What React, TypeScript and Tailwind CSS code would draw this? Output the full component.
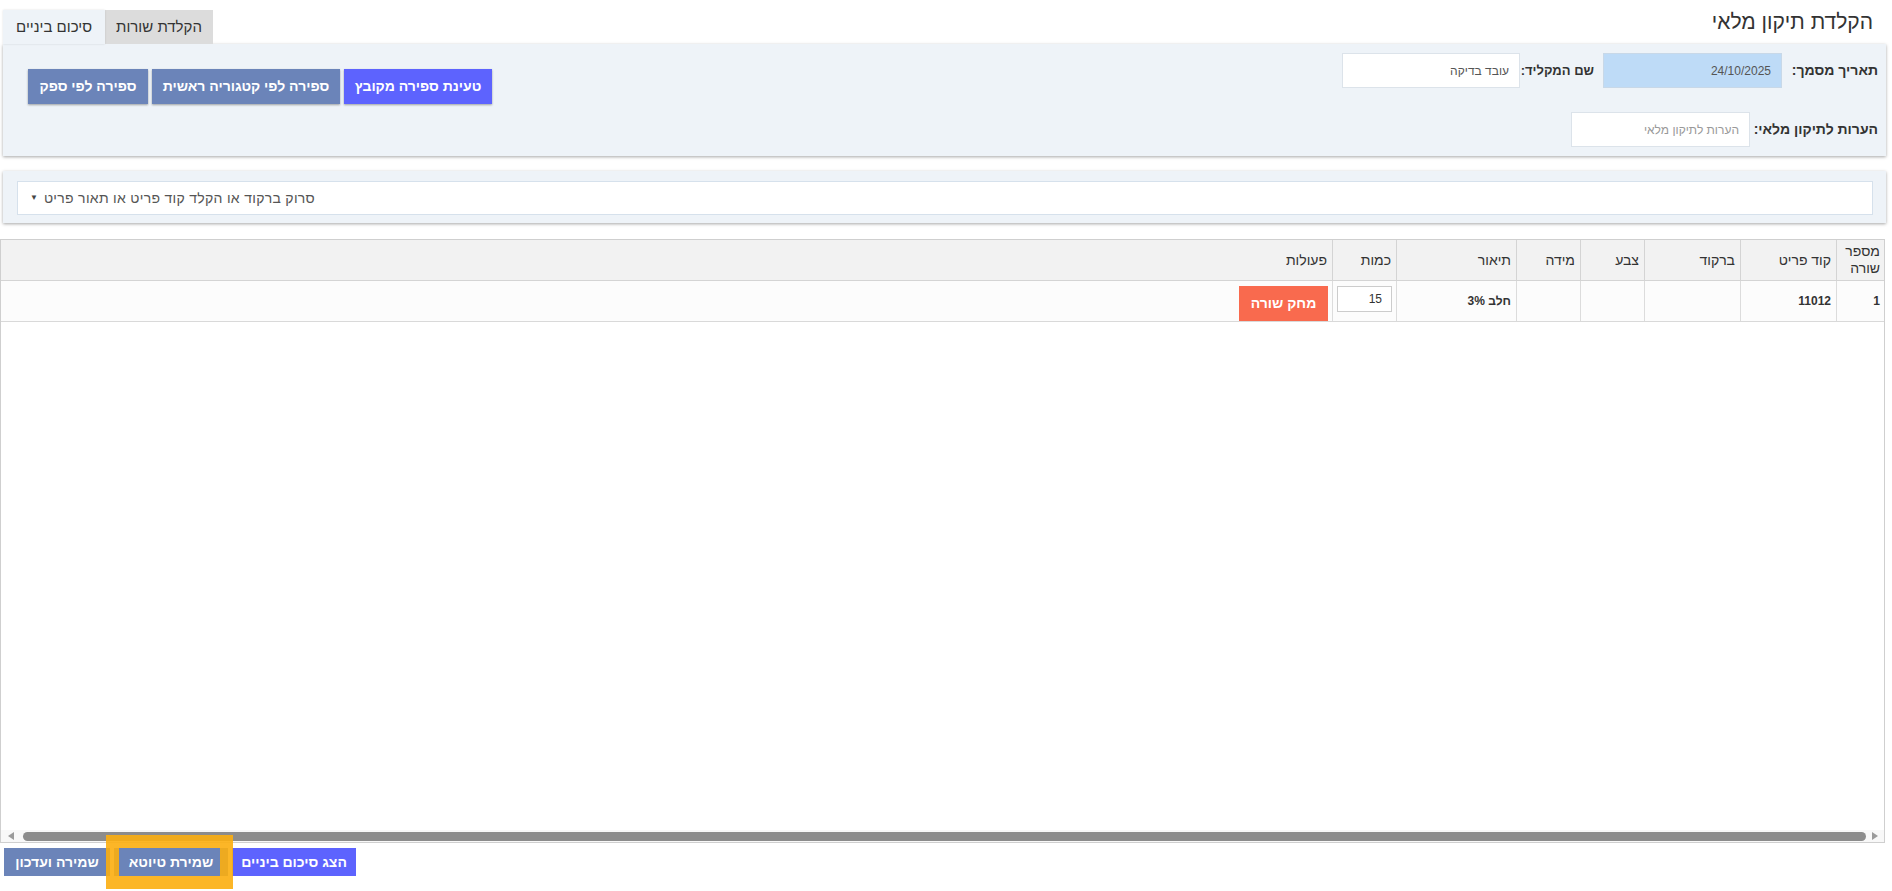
import React from "react";

const FONT = "font-['Liberation_Sans','Noto_Sans',Arial,sans-serif]";

function PanelButton({ w, purple, children }: { w: string; purple?: boolean; children: React.ReactNode }) {
  return (
    <button
      className={`${w} h-[35px] ${purple ? "bg-[#5d63fe]" : "bg-[#6b84b9]"} flex items-center justify-center whitespace-nowrap text-[14px] font-bold text-white shadow-[0_1px_2px_rgba(0,0,0,0.35)]`}
    >
      {children}
    </button>
  );
}

export default function App() {
  return (
    <div dir="rtl" className={`relative h-[891px] w-[1892px] overflow-hidden bg-white text-[#333] ${FONT}`}>
      {/* Header */}
      <div className="flex h-[44px] items-stretch justify-between pl-[3px] pr-[19px]">
        <h1 className="self-center pb-[1px] text-[21px] font-normal leading-none text-[#333]">הקלדת תיקון מלאי</h1>
        <div className="flex items-end">
          <div className="flex h-[34px] w-[108px] items-center justify-center bg-[#dcdcdc] text-[15px] text-[#333]">
            הקלדת שורות
          </div>
          <div className="flex h-[34px] w-[102px] items-center justify-center bg-[#eef3f8] text-[15px] text-[#333] shadow-[0_0_2px_rgba(0,0,0,0.12)]">
            סיכום ביניים
          </div>
        </div>
      </div>

      {/* Panel 1 */}
      <div className="ml-[3px] mr-[6px] flex h-[112px] justify-between bg-[#eef3f8] shadow-[0_1px_3px_rgba(0,0,0,0.35)]">
        <div className="flex flex-col gap-[24px] pr-[8px] pt-[9px]">
          <div className="flex h-[35px] items-center">
            <label className="w-[91px] whitespace-nowrap text-[14px] font-bold text-[#333]">תאריך מסמך:</label>
            <div className="mr-[5px] flex h-[35px] w-[179px] items-center border border-[#c8d8e8] bg-[#bedbf7] pr-[10px] text-[12px] text-[#555]">
              24/10/2025
            </div>
            <label className="mr-[9px] w-[70px] whitespace-nowrap text-[13px] font-bold text-[#333]">שם המקליד:</label>
            <div className="mr-[4px] flex h-[35px] w-[178px] items-center border border-[#dce3ea] bg-white pr-[10px] text-[12px] text-[#555]">
              עובד בדיקה
            </div>
          </div>
          <div className="flex h-[35px] items-center">
            <label className="w-[122px] whitespace-nowrap text-[14px] font-bold text-[#333]">הערות לתיקון מלאי:</label>
            <div className="mr-[6px] flex h-[35px] w-[179px] items-center border border-[#dce3ea] bg-white pr-[10px] text-[12px] text-[#999]">
              הערות לתיקון מלאי
            </div>
          </div>
        </div>
        <div className="flex items-start gap-[4px] pl-[25px] pt-[25px]">
          <PanelButton w="w-[148px]" purple>
            טעינת ספירה מקובץ
          </PanelButton>
          <PanelButton w="w-[188px]">ספירה לפי קטגוריה ראשית</PanelButton>
          <PanelButton w="w-[120px]">ספירה לפי ספק</PanelButton>
        </div>
      </div>

      {/* Panel 2 */}
      <div className="ml-[3px] mr-[6px] mt-[15px] h-[52px] bg-[#eef3f8] pl-[14px] pr-[13px] pt-[10px] shadow-[0_1px_3px_rgba(0,0,0,0.35)]">
        <div className="flex h-[34px] items-center justify-end gap-[6px] border border-[#d6e1ec] bg-white pl-[12px] text-[14px] text-[#555]">
          <span className="tracking-[0.3px]">סרוק ברקוד או הקלד קוד פריט או תאור פריט</span>
          <span className="text-[8px] text-[#444]">▼</span>
        </div>
      </div>

      {/* Table */}
      <div className="mr-[7px] mt-[16px] flex h-[604px] w-[1885px] flex-col border border-[#cfcfcf] bg-white">
        <div className="grid h-[41px] grid-cols-[48px_96px_96px_64px_64px_120px_64px_1fr] border-b border-[#d4d4d4] bg-[#f2f2f2] text-[14px] text-[#333]">
          <div className="flex flex-col justify-center border-l border-[#d4d4d4] pr-[4px] leading-[17px]">
            <span>מספר</span>
            <span>שורה</span>
          </div>
          <div className="flex items-center border-l border-[#d4d4d4] pr-[5px]">קוד פריט</div>
          <div className="flex items-center border-l border-[#d4d4d4] pr-[5px]">ברקוד</div>
          <div className="flex items-center border-l border-[#d4d4d4] pr-[5px]">צבע</div>
          <div className="flex items-center border-l border-[#d4d4d4] pr-[5px]">מידה</div>
          <div className="flex items-center border-l border-[#d4d4d4] pr-[5px]">תיאור</div>
          <div className="flex items-center border-l border-[#d4d4d4] pr-[5px]">כמות</div>
          <div className="flex items-center pr-[5px]">פעולות</div>
        </div>
        <div className="grid h-[41px] grid-cols-[48px_96px_96px_64px_64px_120px_64px_1fr] border-b border-[#d9d9d9] bg-[#fcfcfc] text-[12px] font-bold text-[#333]">
          <div className="flex items-center border-l border-[#dcdcdc] pr-[4px]">1</div>
          <div className="flex items-center border-l border-[#dcdcdc] pr-[5px]">11012</div>
          <div className="border-l border-[#dcdcdc]"></div>
          <div className="border-l border-[#dcdcdc]"></div>
          <div className="border-l border-[#dcdcdc]"></div>
          <div className="flex items-center border-l border-[#dcdcdc] pr-[5px]">חלב 3%</div>
          <div className="border-l border-[#dcdcdc] pr-[4px] pt-[5px]">
            <div className="flex h-[26px] w-[55px] items-center border border-[#cccccc] bg-white pr-[9px] text-[12px] font-normal text-[#333]">
              15
            </div>
          </div>
          <div className="pr-[4px] pt-[5px]">
            <button className="flex h-[35px] w-[89px] items-center justify-center bg-[#f96a4e] text-[14px] font-bold text-white">
              מחק שורה
            </button>
          </div>
        </div>
        <div className="flex-1"></div>
        <div dir="ltr" className="flex h-[12px] items-center bg-[#f8f8f8]">
          <svg width="22" height="12" viewBox="0 0 22 12" className="shrink-0">
            <polygon points="7,6 13,2 13,10" fill="#9a9a9a" />
          </svg>
          <div className="h-[9px] flex-1 rounded-full bg-[#8c8c8c]"></div>
          <svg width="18" height="12" viewBox="0 0 18 12" className="shrink-0">
            <polygon points="12,6 6,2 6,10" fill="#9a9a9a" />
          </svg>
        </div>
      </div>

      {/* Bottom buttons */}
      <div className="mt-[5px] flex justify-end gap-[4px] pl-[4px]">
        <button className="flex h-[28px] w-[124px] items-center justify-center whitespace-nowrap bg-[#5d63fe] text-[14px] font-bold text-white">
          הצג סיכום ביניים
        </button>
        <div className="relative">
          <button className="flex h-[28px] w-[114px] items-center justify-center whitespace-nowrap bg-[#6b84b9] text-[14px] font-bold text-white">
            שמירת טיוטא
          </button>
          <div className="pointer-events-none absolute -bottom-[13px] -left-[8px] -right-[5px] -top-[13px] z-10 border-[13px] border-[rgba(252,174,16,0.9)]"></div>
        </div>
        <button className="flex h-[28px] w-[106px] items-center justify-center whitespace-nowrap bg-[#6b84b9] text-[14px] font-bold text-white">
          שמירה ועדכון
        </button>
      </div>
    </div>
  );
}
